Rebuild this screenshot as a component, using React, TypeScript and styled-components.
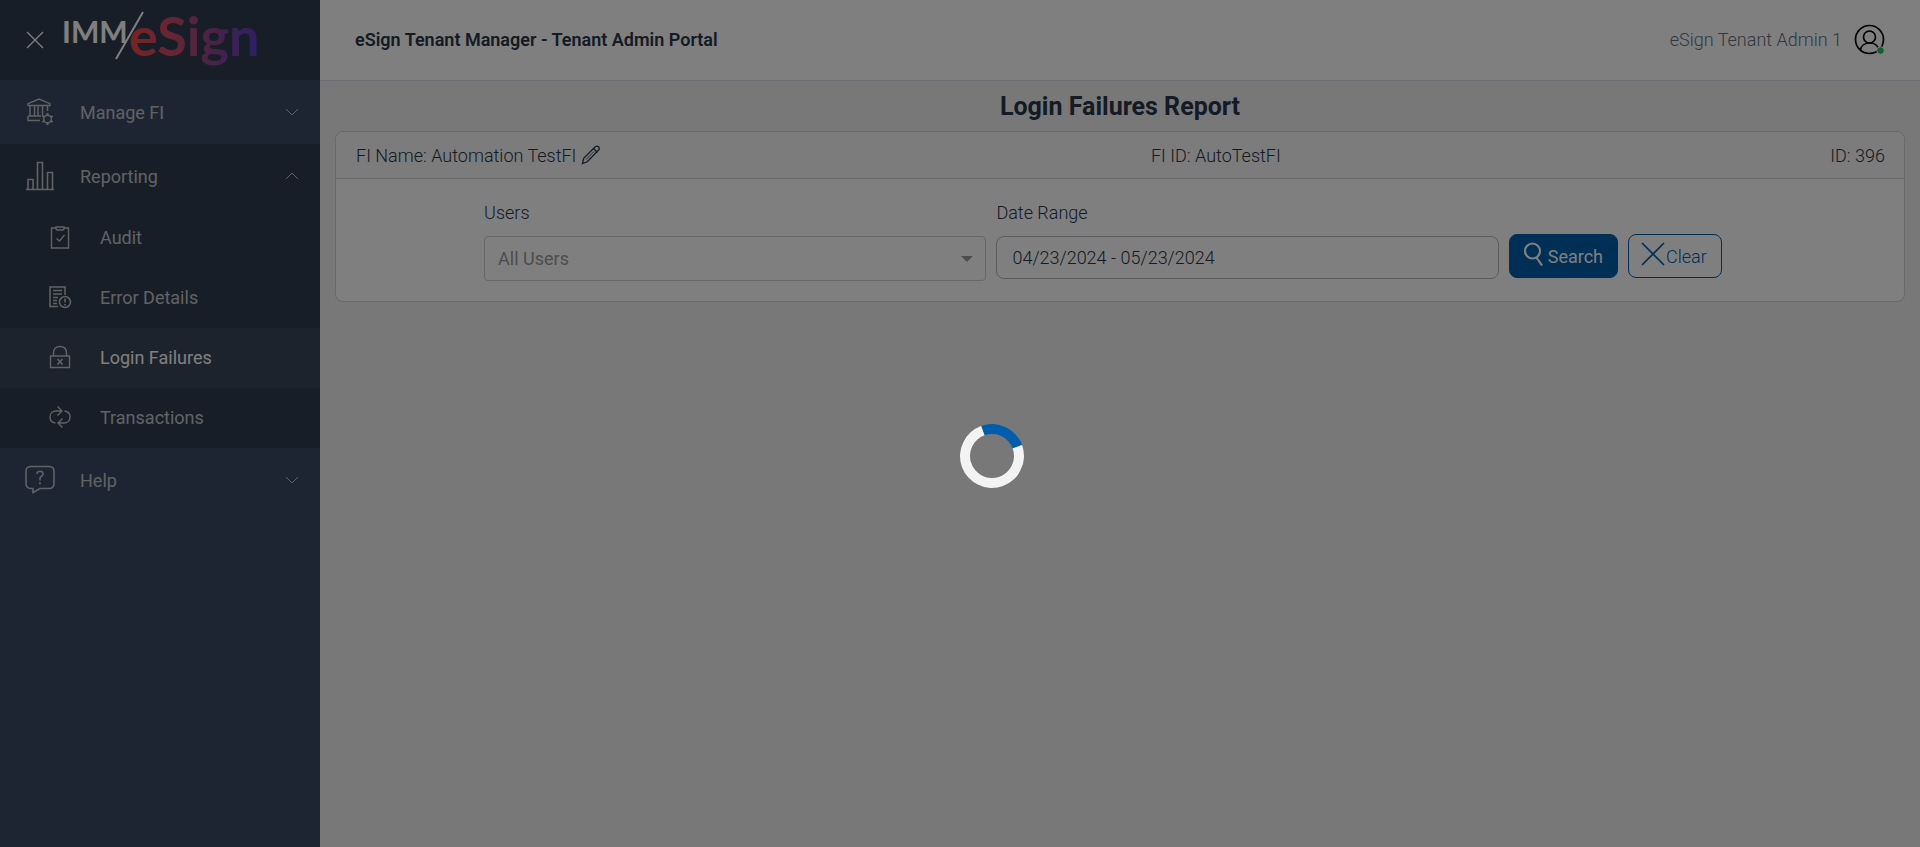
import React from "react";
import styled, { createGlobalStyle, css } from "styled-components";

const GlobalStyle = createGlobalStyle`
  *, *::before, *::after { box-sizing: border-box; }
  body {
    margin: 0;
    background: #f0f0f0;
    color: #2b3648;
    font-family: Roboto, "Liberation Sans", sans-serif;
    font-size: 18px;
    font-weight: 300;
    line-height: 27px;
  }
  button, input, select { font: inherit; color: inherit; }
`;

const Shell = styled.div`
  display: grid;
  grid-template-columns: 320px minmax(0, 1fr);
  min-height: 100vh;
`;

const Sidebar = styled.aside`
  background: #3c4b64;
  color: #fff;
  font-weight: 400;
`;

const Brand = styled.div`
  display: flex;
  align-items: center;
  height: 80px;
  padding-left: 26px;
  gap: 16px;
  background: #303c50;
`;

const IconButton = styled.button`
  display: inline-flex;
  padding: 0;
  border: 0;
  background: none;
  cursor: pointer;
`;

const NavList = styled.ul`
  margin: 0;
  padding: 0;
  list-style: none;
`;

const NavGroup = styled.li<{ $open?: boolean }>`
  background: ${(p) => (p.$open ? "#303c50" : "transparent")};
`;

const NavToggle = styled.button`
  display: flex;
  align-items: center;
  width: 100%;
  height: 64px;
  padding: 0 21px 0 24px;
  border: 0;
  background: none;
  color: #c2c5c9;
  text-align: left;
  cursor: pointer;
`;

const NavIcon = styled.span`
  display: flex;
  width: 56px;
`;

const NavText = styled.span`
  flex: 1;
`;

const NavLink = styled.a<{ $active?: boolean }>`
  display: flex;
  align-items: center;
  height: 60px;
  padding: 0 0 2px 48px;
  gap: 28px;
  color: #c2c5c9;
  text-decoration: none;
  ${(p) =>
    p.$active &&
    css`
      background: #3a4659;
      span { color: #fff; }
    `}
`;

const Topbar = styled.header`
  display: flex;
  align-items: center;
  justify-content: space-between;
  height: 81px;
  padding: 0 35px 2px;
  background: #fff;
  border-bottom: 1px solid #d8dbe0;
`;

const PortalName = styled.div`
  font-weight: 600;
`;

const User = styled.div`
  display: flex;
  align-items: center;
  gap: 12px;
  color: #636f83;
`;

const Content = styled.main`
  padding: 8px 15px;
`;

const Title = styled.h1`
  margin: 0 0 6px;
  font-size: 25px;
  line-height: 36px;
  font-weight: 700;
  text-align: center;
`;

const Card = styled.section`
  overflow: hidden;
  background: #fff;
  border: 1px solid #d2d2d4;
  border-radius: 8px;
`;

const CardHeader = styled.div`
  display: flex;
  align-items: center;
  justify-content: space-between;
  height: 47px;
  padding: 0 19px 0 20px;
  background: #f8f8f8;
  border-bottom: 1px solid #d2d2d4;
`;

const FiName = styled.span`
  display: flex;
  align-items: center;
  gap: 5px;
`;

const Filters = styled.form`
  display: grid;
  grid-template-columns: 1fr 4fr 4fr 3fr;
  padding: 20px 16px 20px 15px;
`;

const Field = styled.div<{ $first?: boolean }>`
  display: flex;
  flex-direction: column;
  gap: 10px;
  padding: 0 5px;
  grid-column-start: ${(p) => (p.$first ? 2 : "auto")};
`;

const SelectWrap = styled.div`
  display: grid;
  align-items: center;
  svg {
    grid-area: 1 / 1;
    justify-self: end;
    margin-right: 13px;
    pointer-events: none;
  }
`;

const Select = styled.select`
  grid-area: 1 / 1;
  width: 100%;
  height: 45px;
  padding: 0 13px;
  appearance: none;
  border: 1px solid #ccc;
  border-radius: 4px;
  background: #fff;
  color: #999;
  font-weight: 400;
`;

const TextInput = styled.input`
  width: 100%;
  height: 43px;
  padding: 0 15px;
  border: 1px solid #b7b9c4;
  border-radius: 8px;
  background: #fff;
`;

const Actions = styled.div`
  display: flex;
  align-items: flex-start;
  gap: 10px;
  padding: 35px 5px 0;
`;

const ActionButton = styled.button<{ $primary?: boolean }>`
  display: flex;
  align-items: center;
  height: 44px;
  padding: 0 14px 0 12px;
  border: 1px solid #005eac;
  border-radius: 8px;
  gap: ${(p) => (p.$primary ? "4px" : "1px")};
  background: ${(p) => (p.$primary ? "#005eac" : "#fff")};
  color: ${(p) => (p.$primary ? "#fff" : "#005eac")};
  font-weight: ${(p) => (p.$primary ? 400 : 300)};
  cursor: pointer;
  svg { margin-bottom: 4px; }
`;

const Overlay = styled.div`
  position: fixed;
  inset: 0;
  background: rgba(0, 0, 0, 0.5);
`;

const Spinner = styled.div`
  position: absolute;
  top: 50%;
  left: 50%;
  width: 64px;
  height: 64px;
  border: 10px solid #f3f3f3;
  border-top-color: #005eac;
  border-radius: 50%;
  transform: rotate(25deg);
`;

const stroke = { fill: "none", stroke: "currentColor" } as const;

const CloseIcon = () => (
  <svg width="18" height="18" viewBox="0 0 18 18" fill="none" stroke="#fff" strokeWidth="1.3">
    <path d="M1 1l16 16M17 1L1 17" />
  </svg>
);

const Logo = () => (
  <svg width="220" height="80" viewBox="60 0 220 80" role="img" aria-label="IMM/eSign">
    <defs>
      <linearGradient id="brand" gradientUnits="userSpaceOnUse" x1="130" y1="0" x2="256" y2="0">
        <stop offset="0" stopColor="#f04646" />
        <stop offset="0.3" stopColor="#d04c66" />
        <stop offset="0.65" stopColor="#90468c" />
        <stop offset="1" stopColor="#6040c8" />
      </linearGradient>
    </defs>
    <text x="62" y="43" fill="#fff" fontFamily="Lato" fontWeight="700" fontSize="30">IMM</text>
    <path d="M143 12L116 59" stroke="#fff" strokeWidth="2" />
    <text x="129" y="56" fill="url(#brand)" fontFamily="Lato" fontWeight="700" fontSize="54">eSign</text>
  </svg>
);

const Chevron = ({ up = false }: { up?: boolean }) => (
  <svg width="14" height="8" viewBox="0 0 14 8" {...stroke}>
    <path d={up ? "M1 7l6-6 6 6" : "M1 1l6 6 6-6"} />
  </svg>
);

const BankIcon = () => (
  <svg width="30" height="28" viewBox="0 0 30 28" {...stroke} strokeWidth="1.4">
    <path d="M4 7.500V5.600L15 1l11 4.600v1.900zM6 8v10M10.500 8v10M14 8v10M18.500 8v10M23.500 8v5M4 18h13M4 18v4.500h12" />
    <circle cx="23.5" cy="21" r="3.8" />
    <path d="M23.500 15v2.200M23.500 24.800V27M18.300 18l1.900 1.100M26.800 22.900l1.900 1.100M18.300 24l1.900-1.100M26.800 19.100l1.900-1.100" strokeWidth="2" />
  </svg>
);

const ChartIcon = () => (
  <svg width="32" height="30" viewBox="0 0 32 30" {...stroke} strokeWidth="1.6">
    <path d="M2 28.500h28M4 28V18.500h5V28M13.500 28V1.500h5V28M23.500 28V11.500h5V28" />
  </svg>
);

const HelpIcon = () => (
  <svg width="32" height="30" viewBox="0 0 32 30" {...stroke} strokeWidth="1.6">
    <path d="M7 1.500h18q5 0 5 5v12q0 5-5 5H16l-7 4v-4H7q-5 0-5-5v-12q0-5 5-5z" />
    <path d="M13 9q0-2.800 3-2.800t3 2.600q0 1.700-1.600 2.500T16 14v1.500M16 17.300v2" />
  </svg>
);

const AuditIcon = () => (
  <svg width="24" height="24" viewBox="0 0 24 24" {...stroke} strokeWidth="1.4">
    <path d="M8 3H3.500v20h17V3H16M8 2h8v1.500q0 1.500-1.500 1.500h-5Q8 5 8 3.500zM8.500 13.500l3 2.500 5-6" />
  </svg>
);

const ErrorIcon = () => (
  <svg width="24" height="24" viewBox="0 0 24 24" {...stroke} strokeWidth="1.5">
    <path d="M10 21.500H2V2h15v8M5 5.500h9M5 9h9M5 12.500h5M5 15.500h4M5 18.500h4" />
    <circle cx="17" cy="17" r="5.500" />
    <path d="M17 13.500v4M17 19v1.500" strokeWidth="1.600" />
  </svg>
);

const LockIcon = () => (
  <svg width="24" height="24" viewBox="0 0 24 24" {...stroke} strokeWidth="1.4">
    <path d="M2.500 11h19v11.500h-19zM5.500 11V8q0-6.500 6.500-6.500T18.500 8v3" />
    <path d="M9.500 14l5 5.500M14.500 14l-5 5.500" strokeWidth="1.700" />
  </svg>
);

const TransferIcon = () => (
  <svg width="24" height="24" viewBox="0 0 24 24" {...stroke} strokeWidth="1.4">
    <path d="M7.500 18C3.500 17.500 2 15 2 12c0-3.500 2.500-6 6-6h5.500M9.500 1.500L14 6l-4.500 4.500M16.500 6C20.500 6.500 22 9 22 12c0 3.500-2.500 6-6 6h-5.500M14.500 13.500L10 18l4.500 4.500" />
  </svg>
);

const PencilIcon = () => (
  <svg width="20" height="20" viewBox="0 0 20 20" fill="none" stroke="#2b3648" strokeWidth="1.3">
    <path d="M1.500 18.500l1.200-5.200L14 2c1.200-1.200 2.500-1.200 3.500-.2s1 2.300-.2 3.500L6.300 16.800zM12.500 3.500l4 4" />
    <path d="M5 14.500l8-8" strokeWidth="0.800" />
  </svg>
);

const UserIcon = () => (
  <svg width="31" height="31" viewBox="0 0 31 31" fill="none" stroke="#000" strokeWidth="1.700">
    <circle cx="15.500" cy="15.500" r="14" />
    <circle cx="15.500" cy="13" r="6" />
    <path d="M6.500 26c.5-4.500 4.500-7 9-7s8 2 9 6" />
    <circle cx="26.500" cy="26.500" r="3.800" fill="#2eb85c" stroke="#fff" strokeWidth="1" />
  </svg>
);

const SearchIcon = () => (
  <svg width="22" height="24" viewBox="0 0 22 24" {...stroke} strokeWidth="2.200">
    <circle cx="10.500" cy="9" r="7.500" />
    <path d="M14.500 15.500L20 23.500" />
  </svg>
);

const ClearIcon = () => (
  <svg width="24" height="24" viewBox="0 0 24 24" {...stroke} strokeWidth="1.700">
    <path d="M1 1l22 22M23 1L1 23" />
  </svg>
);

const reports = [
  { name: "Audit", Icon: AuditIcon },
  { name: "Error Details", Icon: ErrorIcon },
  { name: "Login Failures", Icon: LockIcon, active: true },
  { name: "Transactions", Icon: TransferIcon },
];

export default function App() {
  return (
    <>
      <GlobalStyle />
      <Shell>
        <Sidebar>
          <Brand>
            <IconButton type="button" aria-label="Close menu">
              <CloseIcon />
            </IconButton>
            <Logo />
          </Brand>
          <nav>
            <NavList>
              <NavGroup>
                <NavToggle type="button">
                  <NavIcon><BankIcon /></NavIcon>
                  <NavText>Manage FI</NavText>
                  <Chevron />
                </NavToggle>
              </NavGroup>
              <NavGroup $open>
                <NavToggle type="button" aria-expanded="true">
                  <NavIcon><ChartIcon /></NavIcon>
                  <NavText>Reporting</NavText>
                  <Chevron up />
                </NavToggle>
                <NavList>
                  {reports.map(({ name, Icon, active }) => (
                    <li key={name}>
                      <NavLink href="#" $active={active}>
                        <Icon />
                        <span>{name}</span>
                      </NavLink>
                    </li>
                  ))}
                </NavList>
              </NavGroup>
              <NavGroup>
                <NavToggle type="button">
                  <NavIcon><HelpIcon /></NavIcon>
                  <NavText>Help</NavText>
                  <Chevron />
                </NavToggle>
              </NavGroup>
            </NavList>
          </nav>
        </Sidebar>
        <div>
          <Topbar>
            <PortalName>eSign Tenant Manager - Tenant Admin Portal</PortalName>
            <User>
              <span>eSign Tenant Admin 1</span>
              <UserIcon />
            </User>
          </Topbar>
          <Content>
            <Title>Login Failures Report</Title>
            <Card>
              <CardHeader>
                <FiName>
                  FI Name: Automation TestFI
                  <IconButton type="button" aria-label="Edit FI name">
                    <PencilIcon />
                  </IconButton>
                </FiName>
                <span>FI ID: AutoTestFI</span>
                <span>ID: 396</span>
              </CardHeader>
              <Filters>
                <Field $first>
                  <label htmlFor="users">Users</label>
                  <SelectWrap>
                    <Select id="users" defaultValue="all">
                      <option value="all">All Users</option>
                    </Select>
                    <svg width="12" height="6" viewBox="0 0 12 6" fill="#999">
                      <path d="M0 0h12L6 6z" />
                    </svg>
                  </SelectWrap>
                </Field>
                <Field>
                  <label htmlFor="range">Date Range</label>
                  <TextInput id="range" type="text" defaultValue="04/23/2024 - 05/23/2024" />
                </Field>
                <Actions>
                  <ActionButton type="button" $primary>
                    <SearchIcon />
                    Search
                  </ActionButton>
                  <ActionButton type="button">
                    <ClearIcon />
                    Clear
                  </ActionButton>
                </Actions>
              </Filters>
            </Card>
          </Content>
        </div>
      </Shell>
      <Overlay>
        <Spinner role="status" aria-label="Loading" />
      </Overlay>
    </>
  );
}
